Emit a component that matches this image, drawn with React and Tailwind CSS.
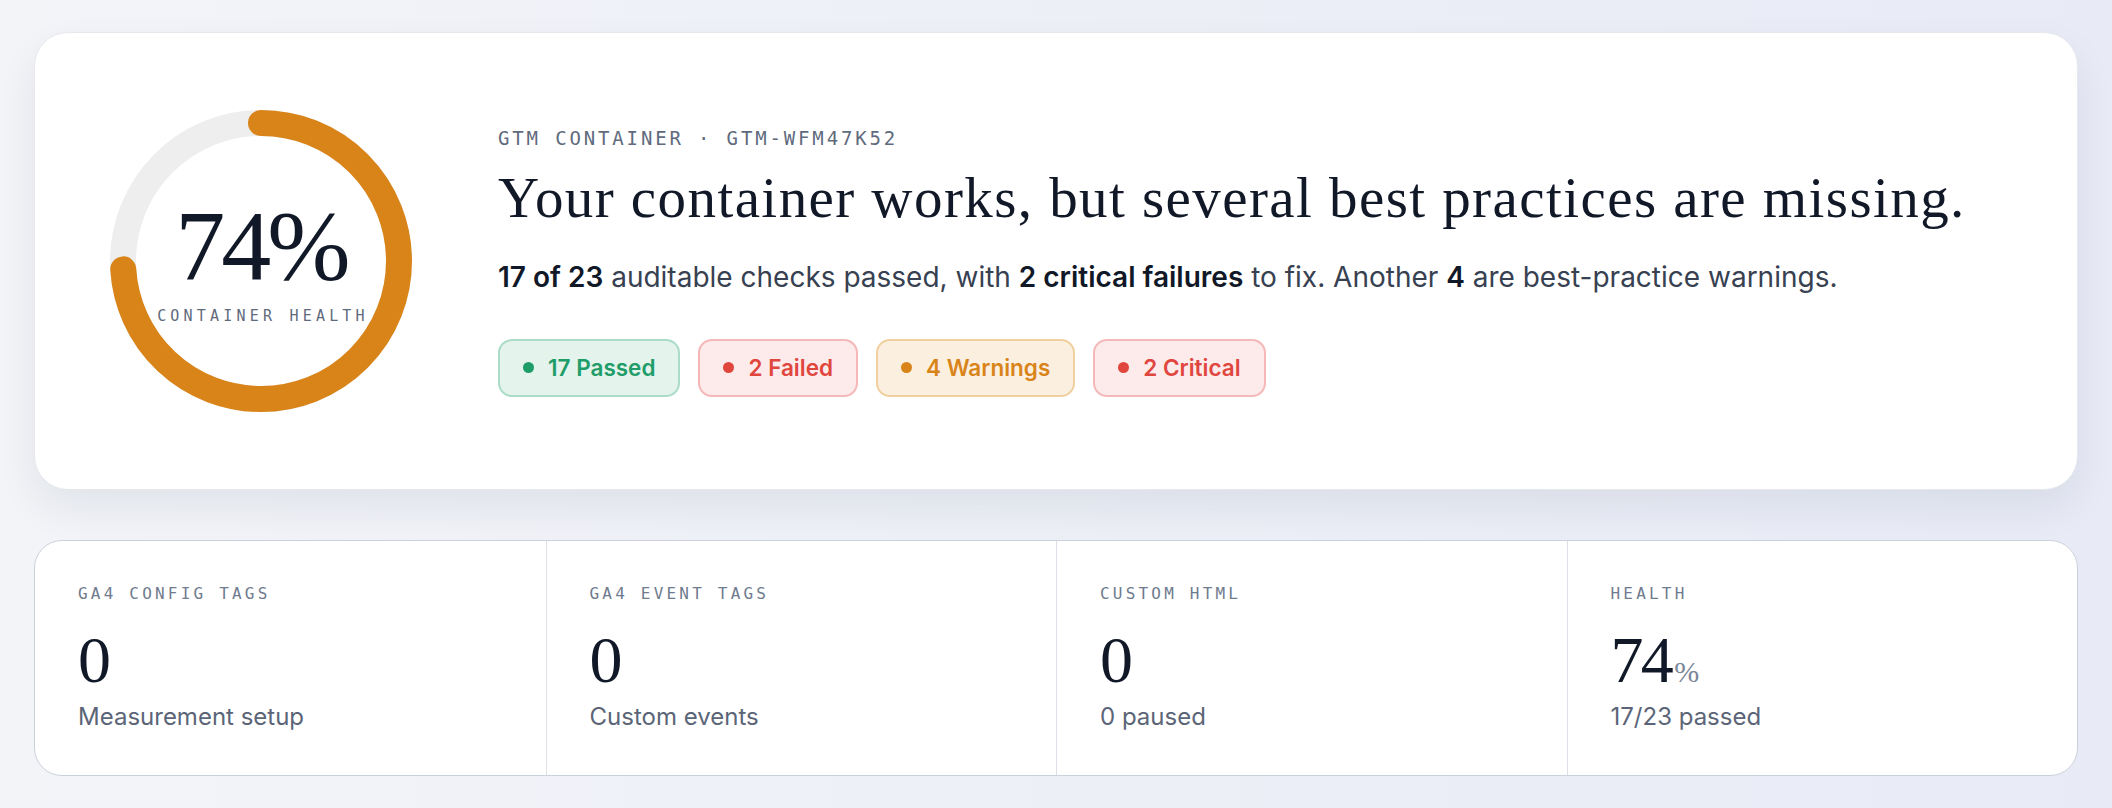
import React from "react";

const serif = "font-['Liberation_Serif',serif]";
const sans = "font-['Inter',sans-serif]";
const mono = "font-['DejaVu_Sans_Mono',monospace]";

const badges = [
  { label: "17 Passed", box: "bg-[#e4f3ec] border-[#abdcc7] text-[#1f9d69]", dot: "bg-[#1f9d69]" },
  { label: "2 Failed", box: "bg-[#fdebeb] border-[#f5b8b8] text-[#e0463d]", dot: "bg-[#e0463d]" },
  { label: "4 Warnings", box: "bg-[#fbf0e0] border-[#f1d09f] text-[#d98419]", dot: "bg-[#d98419]" },
  { label: "2 Critical", box: "bg-[#fdebeb] border-[#f5b8b8] text-[#e0463d]", dot: "bg-[#e0463d]" },
];

const stats = [
  { label: "GA4 CONFIG TAGS", value: "0", note: "Measurement setup" },
  { label: "GA4 EVENT TAGS", value: "0", note: "Custom events" },
  { label: "CUSTOM HTML", value: "0", note: "0 paused" },
  { label: "HEALTH", value: "74", unit: "%", note: "17/23 passed" },
];

// Donut gauge: 302px box, 26px stroke, arc starts at 12 o'clock
function HealthRing({ percent }) {
  const r = 138;
  const circ = 2 * Math.PI * r;
  const filled = (percent / 100) * circ;
  return (
    <div className="relative w-[302px] h-[302px] shrink-0">
      <svg width="302" height="302" viewBox="0 0 302 302" className="-rotate-90">
        <circle cx="151" cy="151" r={r} fill="none" stroke="#eeeeee" strokeWidth="26" />
        <circle
          cx="151"
          cy="151"
          r={r}
          fill="none"
          stroke="#d98419"
          strokeWidth="26"
          strokeLinecap="round"
          strokeDasharray={`${filled} ${circ}`}
        />
      </svg>
      <div className="absolute inset-0 flex flex-col items-center justify-center">
        <div className={`${serif} text-[100px] leading-[100px] tracking-[-0.04em] text-[#111827]`}>
          {percent}%
        </div>
        <div className={`${mono} mt-[10px] text-[15px] leading-[20px] tracking-[0.28em] text-[#5f6b7d] pl-[4px]`}>
          CONTAINER HEALTH
        </div>
      </div>
    </div>
  );
}

export default function App() {
  return (
    <div className="min-h-screen bg-linear-to-r from-[#f2f4f8] to-[#e8ebf6] px-[34px] pt-[32px] pb-[32px]">
      {/* Summary card */}
      <div className="flex items-center bg-white rounded-[34px] border border-[#e6e8ee] shadow-[0_18px_40px_rgba(15,23,42,0.07)] pl-[75px] py-[77px]">
        <HealthRing percent={74} />
        <div className="ml-[86px] flex flex-col">
          <div className={`${mono} text-[19px] leading-[24px] tracking-[0.15em] text-[#5f6b7d]`}>
            GTM CONTAINER · GTM-WFM47K52
          </div>
          <h1 className={`${serif} mt-[15px] text-[57px] leading-[66px] tracking-[0.025em] text-[#111827]`}>
            Your container works, but several best practices are missing.
          </h1>
          <p className={`${sans} mt-[28px] text-[28px] leading-[36px] text-[#374151]`}>
            <span className="font-semibold text-[#111827]">17 of 23</span> auditable checks passed, with{" "}
            <span className="font-semibold text-[#111827]">2 critical failures</span> to fix. Another{" "}
            <span className="font-semibold text-[#111827]">4</span> are best-practice warnings.
          </p>
          <div className="mt-[44px] flex gap-[18px]">
            {badges.map((b) => (
              <div
                key={b.label}
                className={`${sans} ${b.box} h-[58px] flex items-center gap-[14px] px-[23px] rounded-[14px] border-2 text-[22.5px] font-semibold`}
              >
                <span className={`${b.dot} w-[11px] h-[11px] rounded-full`}></span>
                {b.label}
              </div>
            ))}
          </div>
        </div>
      </div>

      {/* Stat strip */}
      <div className="mt-[50px] grid grid-cols-4 bg-white rounded-[28px] border-[1.5px] border-[#cbd1da] overflow-hidden">
        {stats.map((s, i) => (
          <div
            key={s.label}
            className={`px-[43px] pt-[43px] pb-[44px] ${i > 0 ? "border-l border-[#dde1e7]" : ""}`}
          >
            <div className={`${mono} text-[16px] leading-[20px] tracking-[0.2em] text-[#6f7b8e]`}>
              {s.label}
            </div>
            <div className={`${serif} mt-[23px] h-[66px] text-[66px] leading-[66px] text-[#111827] flex items-baseline`}>
              <span className={s.unit ? "tracking-[-0.04em]" : ""}>{s.value}</span>
              {s.unit && <span className="ml-[3px] text-[30px] leading-none text-[#7b8698]">{s.unit}</span>}
            </div>
            <div className={`${sans} mt-[10px] text-[24px] leading-[28px] text-[#5b6577]`}>{s.note}</div>
          </div>
        ))}
      </div>
    </div>
  );
}
